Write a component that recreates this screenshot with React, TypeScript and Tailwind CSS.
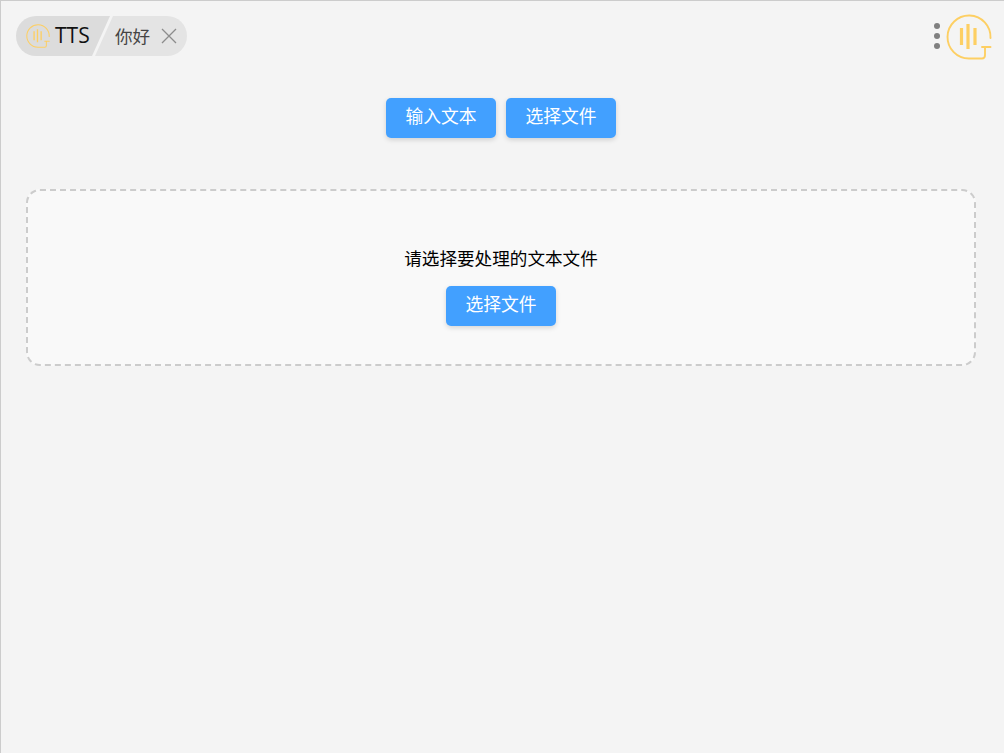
import React from "react";

const FONT = "font-['Open_Sans','Noto_Sans_CJK_SC',sans-serif]";

function Logo({ size, line, bar }: { size: number; line: number; bar: number }) {
  return (
    <svg width={size} height={size} viewBox="0 0 46 46" fill="none" stroke="#fdcf63" strokeLinecap="round" strokeLinejoin="round">
      <path d="M44.5 24 A21.5 21.5 0 1 0 23 44.5 L36 44.5 Q39 44.5 39 41 L39 33 M36 33 L44.5 33" strokeWidth={line} />
      <path d="M15.5 14 V31 M22 10 V35 M29 14 V31" strokeWidth={bar} strokeLinecap="butt" />
    </svg>
  );
}

function Btn({ children }: { children: string }) {
  return (
    <button className="w-[110px] h-10 pb-1 rounded-[5px] bg-[#42a0ff] text-white text-[17.8px] shadow-[0_2px_5px_rgba(0,0,0,0.14)]">
      {children}
    </button>
  );
}

export default function App() {
  return (
    <div className={`${FONT} w-full h-[753px] overflow-hidden bg-[#f4f4f4] border-t border-l border-[#cccccc] text-black`}>
      <header className="flex items-center justify-between h-[70px] pl-[15px] pr-[12px]">
        <div className="flex h-10 w-[171px] rounded-[20px] overflow-hidden">
          <div className="flex items-center w-[94px] -mr-[15px] pl-[10px] gap-[5px] bg-[#dcdcdc] [clip-path:polygon(0_0,100%_0,76px_100%,0_100%)]">
            <Logo size={24} line={2} bar={2.6} />
            <span className="text-[21px] text-[#111]">TTS</span>
          </div>
          <div className="flex items-center flex-1 pl-[20px] gap-[11px] bg-[#e4e4e4] [clip-path:polygon(18px_0,100%_0,100%_100%,0_100%)]">
            <span className="text-[17.6px] text-[#444]">你好</span>
            <svg width="16" height="16" viewBox="0 0 16 16" stroke="#8c8c8c" strokeWidth="1.3">
              <path d="M1 1 L15 15 M15 1 L1 15" />
            </svg>
          </div>
        </div>
        <div className="flex items-center gap-[6px]">
          <div className="flex flex-col gap-[4px]">
            <span className="w-[6px] h-[6px] rounded-full bg-[#808080]" />
            <span className="w-[6px] h-[6px] rounded-full bg-[#808080]" />
            <span className="w-[6px] h-[6px] rounded-full bg-[#808080]" />
          </div>
          <div className="mt-[2px]">
            <Logo size={46} line={1.9} bar={3.2} />
          </div>
        </div>
      </header>
      <main className="w-[950px] ml-[25px]">
        <div className="flex justify-center gap-[10px] mt-[27px]">
          <Btn>输入文本</Btn>
          <Btn>选择文件</Btn>
        </div>
        <div className="flex flex-col items-center mt-[51px] h-[177px] pt-[54px] rounded-[14px] border-2 border-dashed border-[#cccccc] bg-[#f9f9f9]">
          <p className="text-[17.6px] leading-[26px] mb-[15px]">请选择要处理的文本文件</p>
          <Btn>选择文件</Btn>
        </div>
      </main>
    </div>
  );
}
